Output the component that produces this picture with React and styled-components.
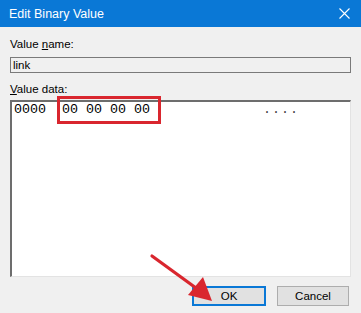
import React from "react";
import styled, { createGlobalStyle } from "styled-components";

const Global = createGlobalStyle`
  html, body { margin: 0; padding: 0; background: #f0f0f0; }
  body { font-family: "Segoe UI", "Liberation Sans", Arial, sans-serif; }
`;

const Window = styled.div`
  position: relative;
  width: 361px;
  height: 313px;
  background: #f0f0f0;
  box-sizing: border-box;
  display: flex;
  flex-direction: column;
  overflow: hidden;
`;

const TitleBar = styled.div`
  height: 27px;
  background: #0a78d6;
  display: flex;
  align-items: center;
  justify-content: space-between;
  padding: 0 10px 0 9px;
  color: #fff;
  font-size: 12.5px;
  flex-shrink: 0;
`;

const Close = styled.svg`
  width: 11px;
  height: 11px;
  margin-right: 1px;
`;

const Body = styled.div`
  flex: 1;
  display: flex;
  flex-direction: column;
  padding: 10px 10px 0 10px;
`;

const Label = styled.div`
  font-size: 11.5px;
  color: #000;
  line-height: 14px;
  margin-top: ${(p) => p.$top || 0}px;
  & u { text-decoration: underline; }
`;

const NameField = styled.div`
  margin-top: 6px;
  height: 16px;
  border: 1px solid #7a7a7a;
  background: #f0f0f0;
  box-sizing: border-box;
  font-size: 11.5px;
  line-height: 14px;
  padding-left: 2px;
  color: #000;
  width: 341px;
`;

const DataBox = styled.div`
  position: relative;
  margin-top: 4px;
  width: 341px;
  height: 177px;
  box-sizing: border-box;
  background: #fff;
  border-top: 2px solid #6d6d6d;
  border-left: 2px solid #6d6d6d;
  border-right: 1px solid #e3e3e3;
  border-bottom: 1px solid #e3e3e3;
  padding: 1px 0 0 2px;
`;

const HexRow = styled.div`
  display: flex;
  font-family: "Liberation Mono", "DejaVu Sans Mono", monospace;
  font-size: 13.33px;
  line-height: 14px;
  color: #000;
  white-space: pre;
`;

const Cell = styled.span`
  flex: 0 0 ${(p) => p.$w}px;
  color: ${(p) => p.$color || "#000"};
  letter-spacing: ${(p) => p.$ls || 0}px;
`;

const Highlight = styled.div`
  position: absolute;
  left: 45px;
  top: -6px;
  width: 104px;
  height: 28px;
  box-sizing: border-box;
  border: 3px solid #d9262e;
`;

const Footer = styled.div`
  display: flex;
  justify-content: flex-end;
  gap: 11px;
  padding: 9px 2px 0 0;
`;

const Button = styled.button`
  width: ${(p) => (p.$primary ? 74 : 72)}px;
  height: 20px;
  box-sizing: border-box;
  background: #e1e1e1;
  border: ${(p) => (p.$primary ? "2px solid #0a78d6" : "1px solid #adadad")};
  font-family: "Segoe UI", "Liberation Sans", Arial, sans-serif;
  font-size: 11.5px;
  color: #000;
  padding: 0;
  display: flex;
  align-items: center;
  justify-content: center;
`;

const Arrow = styled.svg`
  position: absolute;
  left: 0;
  top: 0;
  pointer-events: none;
`;

export default function App() {
  return (
    <>
      <Global />
      <Window>
        <TitleBar>
          <span>Edit Binary Value</span>
          <Close viewBox="0 0 11 11">
            <path d="M0.5 0.5 L10.5 10.5 M10.5 0.5 L0.5 10.5" stroke="#fff" strokeWidth="1.1" />
          </Close>
        </TitleBar>
        <Body>
          <Label>
            Value <u>n</u>ame:
          </Label>
          <NameField>link</NameField>
          <Label $top={9}>
            <u>V</u>alue data:
          </Label>
          <DataBox>
            <HexRow>
              <Cell $w={48}>0000</Cell>
              <Cell $w={201}>00 00 00 00</Cell>
              <Cell $w={40} $color="#444" $ls={1}>....</Cell>
            </HexRow>
            <Highlight />
          </DataBox>
          <Footer>
            <Button $primary>OK</Button>
            <Button>Cancel</Button>
          </Footer>
        </Body>
        <Arrow width="361" height="313" viewBox="0 0 361 313">
          <line x1="152" y1="256" x2="196" y2="288" stroke="#d9262e" strokeWidth="3.2" strokeLinecap="round" />
          <polygon points="212,301 188,295 203,277" fill="#d9262e" />
        </Arrow>
      </Window>
    </>
  );
}
